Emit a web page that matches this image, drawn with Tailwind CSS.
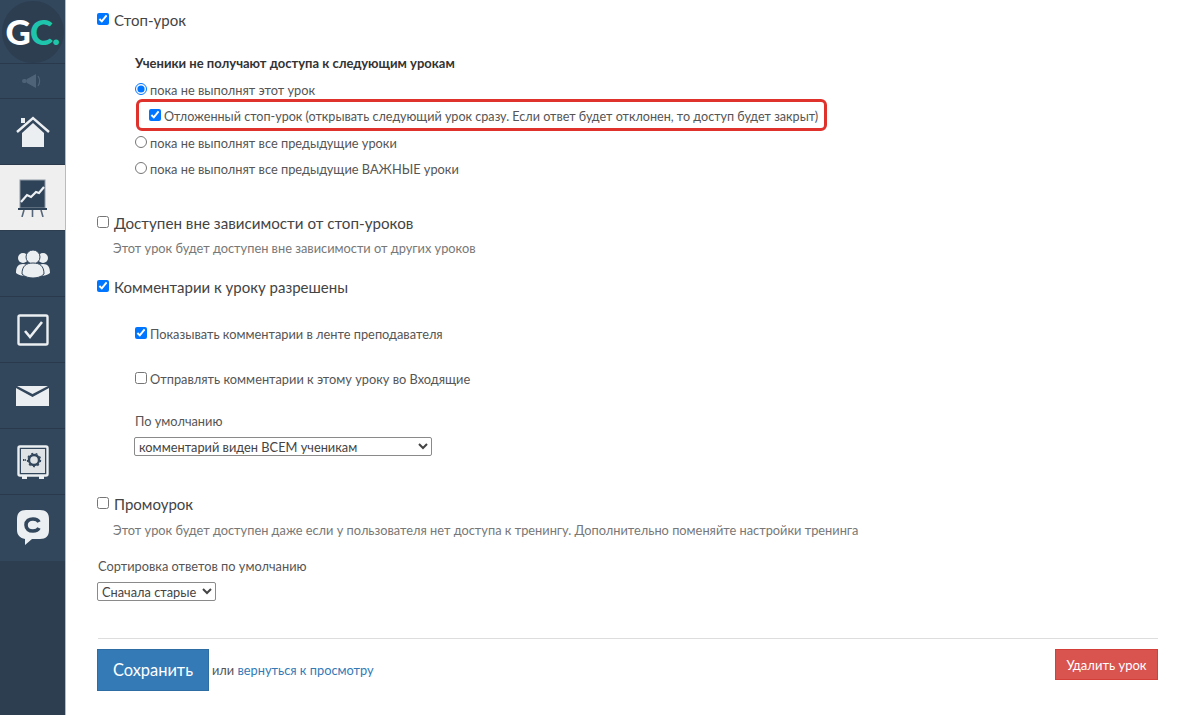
<!DOCTYPE html>
<html lang="en">
<head>
    <meta charset="UTF-8">
    <meta name="viewport" content="width=device-width, initial-scale=1.0">
    <title>Урок</title>
    <script src="https://cdn.jsdelivr.net/npm/@tailwindcss/browser@4"></script>
</head>
<body class="bg-white h-[715px] overflow-hidden flex font-['Lato',sans-serif] text-[#555]">

    <!-- Sidebar -->
    <aside class="w-[66px] h-[715px] shrink-0 bg-[#2c3e50] border-r border-[#b4bcc6] flex flex-col">
        <div class="h-[64px] flex items-center justify-center border-b border-[#2a3a4c] bg-[#32465c]">
            <div class="w-[62px] h-[62px] rounded-full bg-[#2c3e50] flex items-center justify-center text-[35px] font-black tracking-[-1px] text-white">G<span class="text-[#1fc4ad]">C.</span></div>
        </div>
        <div class="h-[35px] flex items-center justify-center border-b border-[#2a3a4c] bg-[#32465c]">
            <svg width="22" height="16" viewBox="0 0 22 16" fill="#4f6378"><rect x="0" y="6" width="5" height="4" rx="2"/><path d="M5 6l9-5v14l-9-5z"/><path d="M16 3c2 3 2 7 0 10" fill="none" stroke="#4f6378" stroke-width="1.2"/></svg>
        </div>
        <a class="h-[66px] flex items-center justify-center border-b border-[#2a3a4c] bg-[#32465c]">
            <svg width="34" height="32" viewBox="0 0 34 32"><path d="M6 17L17 7l11 10v14H6z" fill="#eceff1"/><path d="M1 16L17 2l16 14" fill="none" stroke="#eceff1" stroke-width="2.4"/><rect x="5" y="2" width="4" height="5" fill="#eceff1"/></svg>
        </a>
        <a class="h-[65px] flex items-center justify-center bg-[#efefef]">
            <svg width="30" height="38" viewBox="0 0 30 38"><rect x="2" y="1" width="25" height="28" fill="#2f4358" stroke="#8d99a5"/><path d="M3 23l6-7 4 2 5-5 3 1 5-6" fill="none" stroke="#eef1f3" stroke-width="2.2"/><rect x="0" y="29" width="29" height="2" fill="#2f4358"/><path d="M6 31L4 38M14.500 31v7M23 31l2 7" stroke="#55667a" stroke-width="1.600"/></svg>
        </a>
        <a class="h-[66px] mt-px flex items-center justify-center border-b border-[#2a3a4c] bg-[#32465c]">
            <svg width="34" height="30" viewBox="0 0 34 30" fill="#eceff1"><circle cx="7" cy="9" r="5"/><circle cx="27" cy="9" r="5"/><path d="M0 24c0-6 2-9 7-9s7 3 7 9l-4 3c-4 0-8-1-10-3zM34 24c0-6-2-9-7-9s-7 3-7 9l4 3c4 0 8-1 10-3z"/><circle cx="17" cy="8" r="7" stroke="#32465c"/><path d="M6 25c0-8 4-11 11-11s11 3 11 11c-3 3-7 4-11 4s-8-1-11-4z" stroke="#32465c"/></svg>
        </a>
        <a class="h-[66px] flex items-center justify-center border-b border-[#2a3a4c] bg-[#32465c]">
            <svg width="32" height="32" viewBox="0 0 32 32" fill="none"><rect x="1.500" y="1.500" width="29" height="29" rx="1.500" stroke="#eceff1" stroke-width="2.400"/><path d="M8 17l5 6L25 8" stroke="#eceff1" stroke-width="2.600"/></svg>
        </a>
        <a class="h-[66px] flex items-center justify-center border-b border-[#2a3a4c] bg-[#32465c]">
            <svg width="33" height="20" viewBox="0 0 33 20"><path d="M0 2l16.500 9L33 2v18H0z" fill="#eceff1"/><path d="M1 0h31L16.500 8z" fill="#eceff1"/></svg>
        </a>
        <a class="h-[66px] flex items-center justify-center border-b border-[#2a3a4c] bg-[#32465c]">
            <svg width="32" height="34" viewBox="0 0 32 34" fill="none"><rect x="1.500" y="1.500" width="29" height="29" rx="1.500" stroke="#eceff1" stroke-width="2.400"/><rect x="4" y="4" width="24" height="24" fill="#dfe3e6"/><circle cx="17" cy="15" r="5" stroke="#32465c" stroke-width="2.400"/><circle cx="17" cy="15" r="6.500" stroke="#32465c" stroke-width="1.400" stroke-dasharray="2 2.500"/><path d="M6 15h3" stroke="#32465c" stroke-width="2" stroke-dasharray="1.500 .7"/><path d="M5 31h5v3H5zM22 31h5v3h-5z" fill="#eceff1"/></svg>
        </a>
        <a class="h-[66px] flex items-center justify-center bg-[#32465c]">
            <svg width="32" height="36" viewBox="0 0 32 36"><path d="M9 0h14c6 0 9 3 9 9v11c0 6-3 9-9 9H15l-7 6 0-6c-5-1-8-4-8-9V9c0-6 3-9 9-9z" fill="#eceff1"/><path d="M22 12c-1-2-3-3-6-3-4 0-7 2-7 6s3 6 7 6c3 0 5-1 6-3" fill="none" stroke="#32465c" stroke-width="3.600"/></svg>
        </a>
    </aside>

    <!-- Form -->
    <main class="w-[1092px] pl-[32px] text-[12.8px] leading-[18px]">
        <label class="flex items-center gap-[5px] -ml-px mt-[10px] text-[15px] leading-[20px] text-[#444]">
            <input type="checkbox" checked class="w-[12px] h-[12px] m-0 mb-[3px] accent-[#0075ff]">Стоп-урок
        </label>

        <div class="pl-[37px] mt-[24px]">
            <p class="font-bold text-[13px] text-[#333] leading-[18px]">Ученики не получают доступа к следующим урокам</p>
            <label class="flex items-center gap-[3px] mt-[9px] h-[18px]">
                <input type="radio" name="stop" checked class="w-[12px] h-[12px] m-0 mb-[3px] accent-[#0075ff]">пока не выполнят этот урок
            </label>
            <label class="flex items-center gap-[3px] ml-px w-[691px] h-[32px] pl-[10px] pt-[4px] border-[3px] border-[#e0322d] rounded-[6px] whitespace-nowrap text-[12.6px]">
                <input type="checkbox" checked class="w-[12px] h-[12px] m-0 mb-[4px] accent-[#0075ff]">Отложенный стоп-урок (открывать следующий урок сразу. Если ответ будет отклонен, то доступ будет закрыт)
            </label>
            <label class="flex items-center gap-[3px] mt-[3px] h-[18px]">
                <input type="radio" name="stop" class="w-[12px] h-[12px] m-0 mb-[3px]">пока не выполнят все предыдущие уроки
            </label>
            <label class="flex items-center gap-[3px] mt-[8px] h-[18px]">
                <input type="radio" name="stop" class="w-[12px] h-[12px] m-0 mb-[3px]">пока не выполнят все предыдущие ВАЖНЫЕ уроки
            </label>
        </div>

        <label class="flex items-center gap-[5px] -ml-px mt-[35px] text-[15.2px] leading-[20px] text-[#444]">
            <input type="checkbox" class="w-[12px] h-[12px] m-0 mb-[3px]">Доступен вне зависимости от стоп-уроков
        </label>
        <p class="pl-[15px] mt-[6px] text-[#777]">Этот урок будет доступен вне зависимости от других уроков</p>

        <label class="flex items-center gap-[5px] -ml-px mt-[20px] text-[15px] leading-[20px] text-[#444]">
            <input type="checkbox" checked class="w-[12px] h-[12px] m-0 mb-[3px] accent-[#0075ff]">Комментарии к уроку разрешены
        </label>

        <div class="pl-[37px]">
            <label class="flex items-center gap-[3px] mt-[28px] h-[18px]">
                <input type="checkbox" checked class="w-[12px] h-[12px] m-0 mb-[3px] accent-[#0075ff]">Показывать комментарии в ленте преподавателя
            </label>
            <label class="flex items-center gap-[3px] mt-[27px] h-[18px]">
                <input type="checkbox" class="w-[12px] h-[12px] m-0 mb-[3px]">Отправлять комментарии к этому уроку во Входящие
            </label>
            <p class="mt-[24px]">По умолчанию</p>
            <select class="block mt-[7px] -ml-px w-[298px] h-[19px] bg-white border border-[#8a8a8a] rounded-[2px] text-[12.8px] leading-[15px] text-[#444] appearance-auto">
                <option>комментарий виден ВСЕМ ученикам</option>
            </select>
        </div>

        <label class="flex items-center gap-[5px] -ml-px mt-[38px] text-[15px] leading-[20px] text-[#444]">
            <input type="checkbox" class="w-[12px] h-[12px] m-0 mb-[3px]">Промоурок
        </label>
        <p class="pl-[15px] mt-[7px] text-[#777]">Этот урок будет доступен даже если у пользователя нет доступа к тренингу. Дополнительно поменяйте настройки тренинга</p>

        <p class="mt-[18px]">Сортировка ответов по умолчанию</p>
        <select class="block mt-[7px] -ml-px w-[119px] h-[19px] bg-white border border-[#8a8a8a] rounded-[2px] text-[12.8px] leading-[15px] text-[#444] appearance-auto">
            <option>Сначала старые</option>
        </select>

        <div class="mt-[37px] w-[1060px] border-t border-[#ddd] pt-[10px] flex items-start justify-between">
            <div class="flex items-center gap-[3px] -ml-px">
                <button class="w-[112px] h-[42px] bg-[#337ab7] border border-[#2e6da4] text-white text-[16.4px]">Сохранить</button>
                <span>или <a class="text-[#337ab7]">вернуться к просмотру</a></span>
            </div>
            <button class="w-[103px] h-[31px] bg-[#d9534f] border border-[#d43f3a] text-white text-[13px]">Удалить урок</button>
        </div>
    </main>

</body>
</html>
